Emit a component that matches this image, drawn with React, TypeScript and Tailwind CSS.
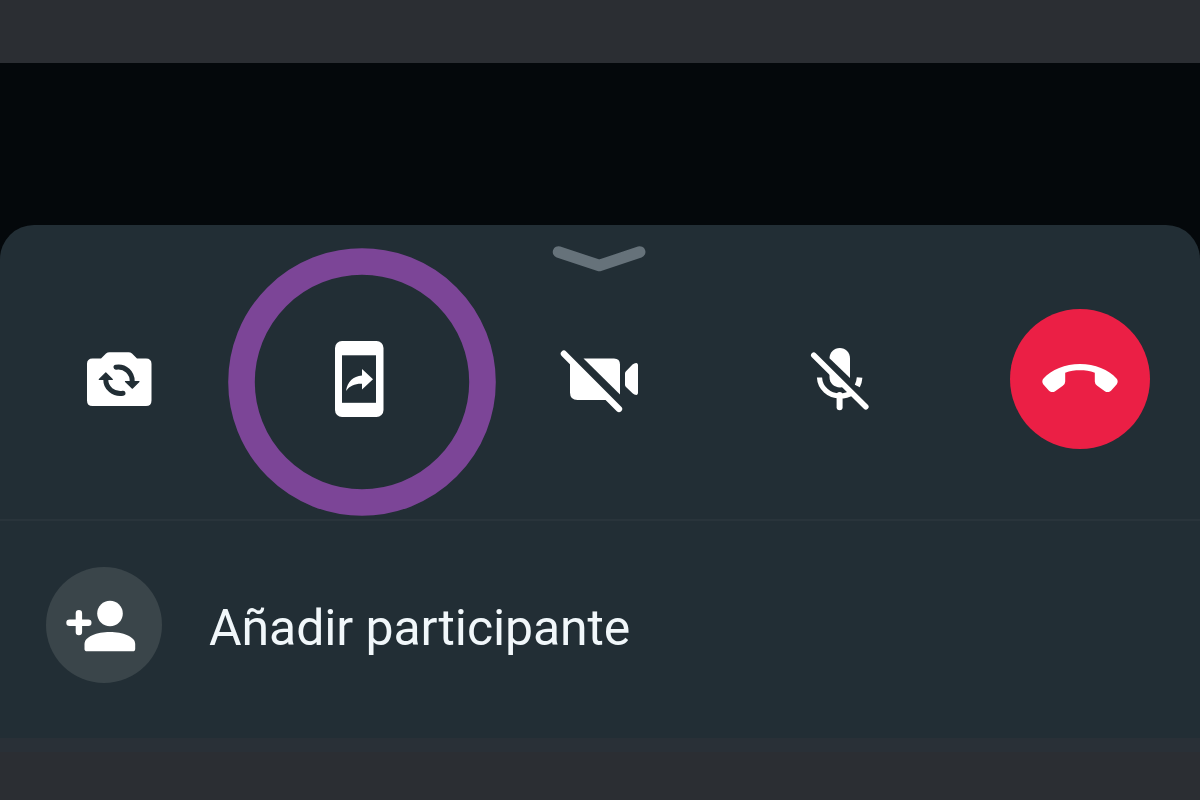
import type { ReactNode } from 'react';

function SwitchCameraIcon() {
  return (
    <svg viewBox="0 0 100 100" className="mt-0.5 size-[100px]">
      <path
        fill="#fff"
        d="M22.5 28.5H31L36 23.5Q37.5 22.3 39.5 22.3H58.5Q60.5 22.3 62 23.5L67 28.5H76Q81.5 28.5 81.5 34V70.5Q81.5 76 76 76H22.5Q17 76 17 70.5V34Q17 28.5 22.5 28.5Z"
      />
      <g fill="none" stroke="#222e35" strokeWidth="5" strokeLinecap="round">
        <path d="M46 37.2C55.5 35.8 62.4 43 62.2 51.5" />
        <path d="M53 63.2C43.5 64.7 35.6 58 35.8 49.5" />
      </g>
      <g fill="#222e35" stroke="#222e35" strokeWidth="1.2" strokeLinejoin="round">
        <path d="M55.5 51.5H69L62.2 58.2Z" />
        <path d="M29.3 49.5H42.3L35.8 42.9Z" />
      </g>
    </svg>
  );
}

function ShareScreenIcon() {
  return (
    <svg viewBox="0 0 100 100" className="mt-0.5 size-[100px]">
      <rect x="25" y="11" width="48.5" height="76" rx="7" fill="#fff" />
      <rect x="32" y="25.3" width="34" height="47.5" fill="#222e35" />
      <path fill="#fff" d="M36 61C37.5 51.5 43 46.5 52 45.5V39L63 49.3L52 59.6V53.8C45 53.6 40 55.5 36 61Z" />
    </svg>
  );
}

function VideoOffIcon() {
  return (
    <svg viewBox="0 0 100 100" className="mt-0.5 size-[100px]">
      <g fill="#fff">
        <path d="M33.5 28.5H64Q70 28.5 70 34.5V64.5Z" />
        <path d="M20 30V62.5Q20 70 27.5 70H60Z" />
        <path d="M75 43.5Q75 42.3 76 41.3L82.5 34.5Q84.5 32.7 86.5 32.9Q88 33.2 88 35V63Q88 64.6 86.5 64.9Q84.5 65 82.5 63.3L76 57Q75 56 75 54.8Z" />
      </g>
      <path d="M13.9 23.7L69 79" stroke="#fff" strokeWidth="6.3" strokeLinecap="round" />
    </svg>
  );
}

function MicOffIcon() {
  return (
    <svg viewBox="0 0 100 100" className="mt-0.5 size-[100px]">
      <g fill="#fff">
        <path d="M39.5 28.3C39.5 22.3 44 18 49.8 18S60 22.3 60 28.3V48Z" />
        <path d="M39.5 38.5L57 55.5C55 56.8 52.5 57.4 50 57.4C44 57.4 39.5 53 39.5 47Z" />
      </g>
      <g fill="none" stroke="#fff">
        <path d="M29.5 47.5C30 58 39 66 49.5 66C54 66 58.5 65 62.5 62.5" strokeWidth="5.2" />
        <path d="M69.6 47.5Q69.3 52 67.3 56" strokeWidth="5.6" />
        <path d="M49.6 65V77.2" strokeWidth="6" strokeLinecap="round" />
        <path d="M23.8 25.3L75.8 76.7" strokeWidth="5.6" strokeLinecap="round" />
      </g>
    </svg>
  );
}

function HangUpIcon() {
  return (
    <svg viewBox="0 3.5 80 40" className="h-10 w-20">
      <path
        fill="#fff"
        d="M40 8.5C55 8.5 68.5 14 76.5 23C78 24.7 78 27 76.8 28.7L71 35.2C69.5 36.8 67 37 65.2 36L57.2 30.3Q54.8 28.6 54.8 26V17.2C50 15.4 45 14.8 40 14.8S30 15.4 25.2 17.2V26Q25.2 28.6 22.8 30.3L14.8 36C13 37 10.5 36.8 9 35.2L3.2 28.7C2 27 2 24.7 3.5 23C11.5 14 25 8.5 40 8.5Z"
      />
    </svg>
  );
}

function AddPersonIcon() {
  return (
    <svg viewBox="0 0 116 116" className="size-[116px]">
      <path d="M23.5 55.8H42.3M32.9 46.3V65.1" stroke="#fff" strokeWidth="6.4" strokeLinecap="round" />
      <circle cx="64" cy="46.5" r="12.8" fill="#fff" />
      <path
        fill="#fff"
        d="M38.5 77C38.5 69.5 51 65 63.8 65S89.2 69.5 89.2 77V81.7Q89.2 84.3 86.6 84.3H41.1Q38.5 84.3 38.5 81.7Z"
      />
    </svg>
  );
}

// One of the buttons in the call toolbar
function CallButton({ label, children }: { label: string; children: ReactNode }) {
  return (
    <button aria-label={label} className="flex items-center justify-center">
      {children}
    </button>
  );
}

export default function App() {
  return (
    <div className="flex h-[800px] w-[1200px] flex-col overflow-hidden bg-[#2b2e33] font-['Roboto',sans-serif]">
      <div className="h-[62.5px] shrink-0" />

      <main className="flex h-[675.5px] shrink-0 flex-col bg-[#04080b]">
        {/* Video area */}
        <div className="h-[162.5px] shrink-0" />

        {/* Bottom sheet */}
        <section className="flex flex-1 flex-col rounded-t-[34px] bg-[#222e35]">
          <div className="relative flex h-[296px] flex-col border-b-2 border-[#29343b]">
            <svg viewBox="0 0 120 50" className="mt-[10px] ml-[540px] h-[50px] w-[120px] shrink-0">
              <path
                d="M18.5 17L59.3 30.5L99.7 17"
                fill="none"
                stroke="#66727a"
                strokeWidth="11.5"
                strokeLinecap="round"
                strokeLinejoin="round"
              />
            </svg>

            <div className="mt-6 grid h-[140px] grid-cols-5">
              <CallButton label="Cambiar cámara">
                <SwitchCameraIcon />
              </CallButton>
              <CallButton label="Compartir pantalla">
                <ShareScreenIcon />
              </CallButton>
              <CallButton label="Cámara">
                <VideoOffIcon />
              </CallButton>
              <CallButton label="Micrófono">
                <MicOffIcon />
              </CallButton>
              <CallButton label="Colgar">
                <span className="flex size-[140px] items-center justify-center rounded-full bg-[#eb1f45]">
                  <HangUpIcon />
                </span>
              </CallButton>
            </div>

            {/* Highlight around the share button */}
            <svg viewBox="0 0 268 268" className="pointer-events-none absolute top-[23px] left-[228px] size-[268px]">
              <circle cx="134" cy="134" r="120.5" fill="none" stroke="#7c4597" strokeWidth="26.6" />
            </svg>
          </div>

          <button className="flex h-[208px] items-center gap-12 pl-[46px] text-left">
            <span className="flex size-[116px] items-center justify-center rounded-full bg-[#3a454a]">
              <AddPersonIcon />
            </span>
            <span className="mt-1.5 -ml-px text-[50px] leading-none tracking-[-0.1px] text-[#f1f7fa]">
              Añadir participante
            </span>
          </button>
        </section>
      </main>

      <div className="h-[14px] shrink-0 bg-[#293037]" />
    </div>
  );
}
